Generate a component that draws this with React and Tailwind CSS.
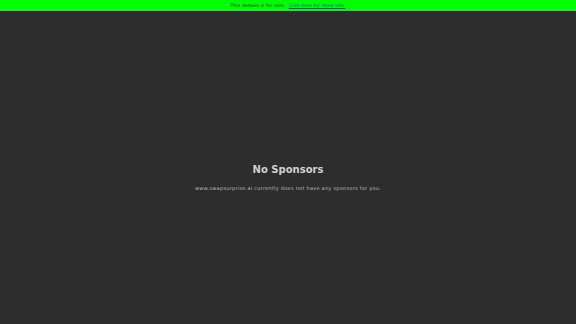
export default function App() {
  return (
    <div className="flex h-[324px] w-[576px] flex-col bg-[#2d2d2d] font-['DejaVu_Sans',sans-serif]">
      <div className="flex h-[11px] items-center justify-center bg-[#00ff00] pt-[1px] text-[4.7px] text-[#333]">
        <span>This domain is for sale.</span>
        <a className="ml-[4px] text-[#1f4f9a] underline">Click here for more info.</a>
      </div>
      <div className="flex flex-1 flex-col items-center pt-[152px]">
        <h1 className="text-[10px] font-bold leading-[14px] text-[#d0d0d0]">No Sponsors</h1>
        <p className="mt-[8px] text-[5px] leading-[7px] tracking-[0.26px] text-[#bdbdbd]">
          www.swapsurprise.ai currently does not have any sponsors for you.
        </p>
      </div>
    </div>
  );
}
